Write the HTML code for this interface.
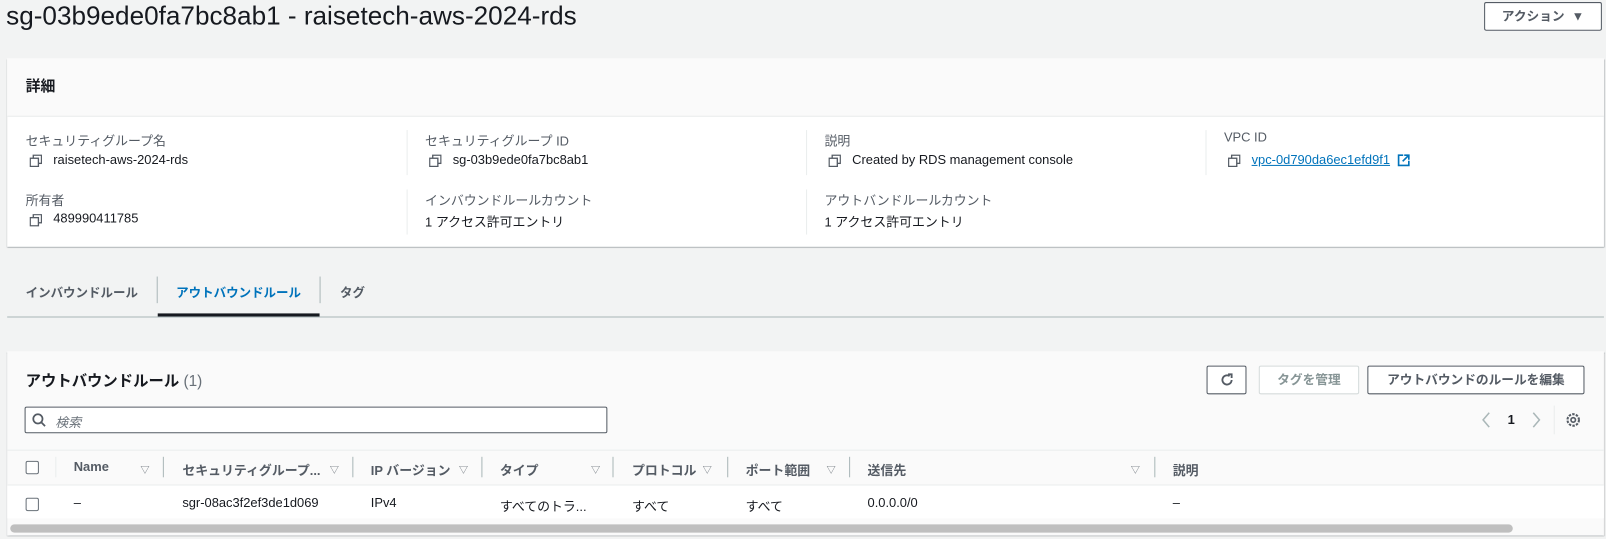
<!DOCTYPE html>
<html><head><meta charset="utf-8"><style>
html,body{margin:0;padding:0;width:1606px;height:538px;overflow:hidden;background:#f2f3f3;}
#w{position:absolute;left:0;top:0;width:1568px;height:526px;transform:scale(1.02423);transform-origin:0 0;font-family:"Liberation Sans","Noto Sans CJK JP",sans-serif;color:#16191f;font-size:12.6px;}
.a{position:absolute;white-space:nowrap;}
.lbl{color:#545b64;}
.b{font-weight:bold;}
.vd{position:absolute;width:1px;background:#eaeded;}
.btn{position:absolute;border:1px solid #545b64;border-radius:2px;background:#fff;box-sizing:border-box;font-weight:bold;color:#545b64;text-align:center;font-size:12.4px;}
.cb{position:absolute;width:11px;height:11px;border:1px solid #687078;border-radius:2px;background:#fff;}
.tri{position:absolute;color:#687078;font-size:9px;}
.hd{position:absolute;width:1px;height:20px;background:#aab7b8;}
</style></head><body><div id="w">
<svg width="0" height="0" style="position:absolute"><defs>
<g id="cp"><rect x="3.5" y="0.5" width="8" height="8" fill="none" stroke="#545b64" stroke-width="1.3"/><rect x="0.5" y="3.5" width="8" height="8" fill="#fff" stroke="#545b64" stroke-width="1.3"/></g></defs></svg>

<div class="a" style="left:6px;top:2px;font-size:25.5px;">sg-03b9ede0fa7bc8ab1 - raisetech-aws-2024-rds</div>
<div class="btn" style="left:1449px;top:2px;width:115px;height:28px;line-height:26px;">アクション&nbsp;&nbsp;▼</div>

<div style="position:absolute;left:7px;top:57px;width:1559px;height:184px;background:#fff;box-shadow:0 1px 1px rgba(0,28,36,.3),1px 1px 1px rgba(0,28,36,.15);">
<div style="height:56px;background:#fafafa;border-bottom:1px solid #eaeded;"></div></div>
<div class="a b" style="left:25px;top:73px;font-size:14.5px;">詳細</div>

<div class="a lbl" style="left:25px;top:127px;">セキュリティグループ名</div>
<svg class="a" style="left:29px;top:151px" width="12" height="12"><use href="#cp"/></svg>
<div class="a" style="left:52px;top:149px;">raisetech-aws-2024-rds</div>
<div class="a lbl" style="left:25px;top:185px;">所有者</div>
<svg class="a" style="left:29px;top:209px" width="12" height="12"><use href="#cp"/></svg>
<div class="a" style="left:52px;top:206px;">489990411785</div>

<div class="vd" style="left:397px;top:127px;height:44px;"></div>
<div class="vd" style="left:397px;top:185px;height:44px;"></div>
<div class="a lbl" style="left:415px;top:127px;">セキュリティグループ ID</div>
<svg class="a" style="left:419px;top:151px" width="12" height="12"><use href="#cp"/></svg>
<div class="a" style="left:442px;top:149px;">sg-03b9ede0fa7bc8ab1</div>
<div class="a lbl" style="left:415px;top:185px;">インバウンドルールカウント</div>
<div class="a" style="left:415px;top:206px;">1 アクセス許可エントリ</div>

<div class="vd" style="left:787px;top:127px;height:44px;"></div>
<div class="vd" style="left:787px;top:185px;height:44px;"></div>
<div class="a lbl" style="left:805px;top:127px;">説明</div>
<svg class="a" style="left:809px;top:151px" width="12" height="12"><use href="#cp"/></svg>
<div class="a" style="left:832px;top:149px;">Created by RDS management console</div>
<div class="a lbl" style="left:805px;top:185px;">アウトバンドルールカウント</div>
<div class="a" style="left:805px;top:206px;">1 アクセス許可エントリ</div>

<div class="vd" style="left:1177px;top:127px;height:44px;"></div>
<div class="a lbl" style="left:1195px;top:127px;">VPC ID</div>
<svg class="a" style="left:1199px;top:151px" width="12" height="12"><use href="#cp"/></svg>
<div class="a" style="left:1222px;top:149px;color:#0073bb;text-decoration:underline;">vpc-0d790da6ec1efd9f1</div>
<svg class="a" style="left:1364px;top:150px" width="13" height="13"><path d="M6 1.5H1.5v10h10V7" fill="none" stroke="#0073bb" stroke-width="1.6"/><path d="M7 1.5h4.5V6M11.5 1.5L5.5 7.5" fill="none" stroke="#0073bb" stroke-width="1.6"/></svg>

<div class="a b" style="left:25px;top:276px;color:#545b64;font-size:12.2px;">インバウンドルール</div>
<div style="position:absolute;left:153px;top:270px;width:1px;height:26px;background:#aab7b8;"></div>
<div class="a b" style="left:172px;top:276px;color:#0073bb;font-size:12.2px;">アウトバウンドルール</div>
<div style="position:absolute;left:154px;top:306px;width:158px;height:3px;background:#16191f;"></div>
<div style="position:absolute;left:312px;top:270px;width:1px;height:26px;background:#aab7b8;"></div>
<div class="a b" style="left:332px;top:276px;color:#545b64;font-size:12.2px;">タグ</div>
<div style="position:absolute;left:7px;top:309px;width:1559px;height:1px;background:#aab7b8;"></div>

<div style="position:absolute;left:7px;top:343px;width:1559px;height:180px;background:#fafafa;box-shadow:0 1px 1px rgba(0,28,36,.3),1px 1px 1px rgba(0,28,36,.15);overflow:hidden;">
<div style="position:absolute;left:0;top:96px;width:100%;height:1px;background:#eaeded;"></div>
<div style="position:absolute;left:0;top:130px;width:100%;height:32px;background:#fff;border-top:1px solid #eaeded;"></div>
<div style="position:absolute;left:3px;top:169px;width:1467px;height:8px;border-radius:4px;background:#bfbfbf;"></div>
</div>
<div class="a b" style="left:25px;top:361px;font-size:15px;">アウトバウンドルール <span style="font-weight:normal;color:#687078;">(1)</span></div>
<div class="btn" style="left:1178px;top:357px;width:39px;height:28px;">
<svg style="margin-top:6px" width="14" height="14" viewBox="0 0 14 14"><path d="M11.5 7A4.5 4.5 0 1 1 9.5 3.2" fill="none" stroke="#545b64" stroke-width="1.8"/><path d="M8 1.5h3.5V5" fill="none" stroke="#545b64" stroke-width="1.8"/></svg></div>
<div class="btn" style="left:1229px;top:357px;width:98px;height:28px;line-height:26px;border-color:#d5dbdb;color:#879596;">タグを管理</div>
<div class="btn" style="left:1335px;top:357px;width:212px;height:28px;line-height:26px;">アウトバウンドのルールを編集</div>

<div style="position:absolute;left:24px;top:397px;width:569px;height:26px;border:1px solid #545b64;border-radius:2px;background:#fff;box-sizing:border-box;"></div>
<svg class="a" style="left:31px;top:403px" width="14" height="14"><circle cx="6" cy="6" r="4.5" fill="none" stroke="#545b64" stroke-width="1.7"/><path d="M9.5 9.5L13 13" stroke="#545b64" stroke-width="1.7"/></svg>
<div class="a" style="left:54px;top:402px;color:#687078;font-style:italic;">検索</div>

<svg class="a" style="left:1446px;top:402px" width="10" height="16"><path d="M8 1L2 8l6 7" fill="none" stroke="#aab7b8" stroke-width="1.5"/></svg>
<div class="a b" style="left:1472px;top:403px;">1</div>
<svg class="a" style="left:1495px;top:402px" width="10" height="16"><path d="M2 1l6 7-6 7" fill="none" stroke="#aab7b8" stroke-width="1.5"/></svg>
<div style="position:absolute;left:1517px;top:396px;width:1px;height:28px;background:#eaeded;"></div>
<svg class="a" style="left:1528px;top:402px" width="16" height="16" viewBox="0 0 16 16"><circle cx="8" cy="8" r="2.2" fill="none" stroke="#545b64" stroke-width="1.6"/><circle cx="8" cy="8" r="5.6" fill="none" stroke="#545b64" stroke-width="2" stroke-dasharray="2.4 1.2"/></svg>

<div class="cb" style="left:25px;top:450px;"></div>
<div style="position:absolute;left:54px;top:446px;width:1px;height:20px;background:#eaeded;"></div>
<div class="a b" style="left:72px;top:449px;color:#545b64;">Name</div><div class="tri" style="left:137px;top:452px;">▽</div><div class="hd" style="left:159px;top:446px;"></div>
<div class="a b" style="left:178px;top:449px;color:#545b64;">セキュリティグループ...</div><div class="tri" style="left:322px;top:452px;">▽</div><div class="hd" style="left:344px;top:446px;"></div>
<div class="a b" style="left:362px;top:449px;color:#545b64;">IP バージョン</div><div class="tri" style="left:448px;top:452px;">▽</div><div class="hd" style="left:470px;top:446px;"></div>
<div class="a b" style="left:488px;top:449px;color:#545b64;">タイプ</div><div class="tri" style="left:577px;top:452px;">▽</div><div class="hd" style="left:598px;top:446px;"></div>
<div class="a b" style="left:617px;top:449px;color:#545b64;">プロトコル</div><div class="tri" style="left:686px;top:452px;">▽</div><div class="hd" style="left:710px;top:446px;"></div>
<div class="a b" style="left:728px;top:449px;color:#545b64;">ポート範囲</div><div class="tri" style="left:807px;top:452px;">▽</div><div class="hd" style="left:829px;top:446px;"></div>
<div class="a b" style="left:847px;top:449px;color:#545b64;">送信先</div><div class="tri" style="left:1104px;top:452px;">▽</div><div class="hd" style="left:1127px;top:446px;"></div>
<div class="a b" style="left:1145px;top:449px;color:#545b64;">説明</div>

<div class="cb" style="left:25px;top:486px;"></div>
<div class="a" style="left:72px;top:484px;">–</div>
<div class="a" style="left:178px;top:484px;">sgr-08ac3f2ef3de1d069</div>
<div class="a" style="left:362px;top:484px;">IPv4</div>
<div class="a" style="left:488px;top:484px;">すべてのトラ...</div>
<div class="a" style="left:617px;top:484px;">すべて</div>
<div class="a" style="left:728px;top:484px;">すべて</div>
<div class="a" style="left:847px;top:484px;">0.0.0.0/0</div>
<div class="a" style="left:1145px;top:484px;">–</div>
</div></body></html>
